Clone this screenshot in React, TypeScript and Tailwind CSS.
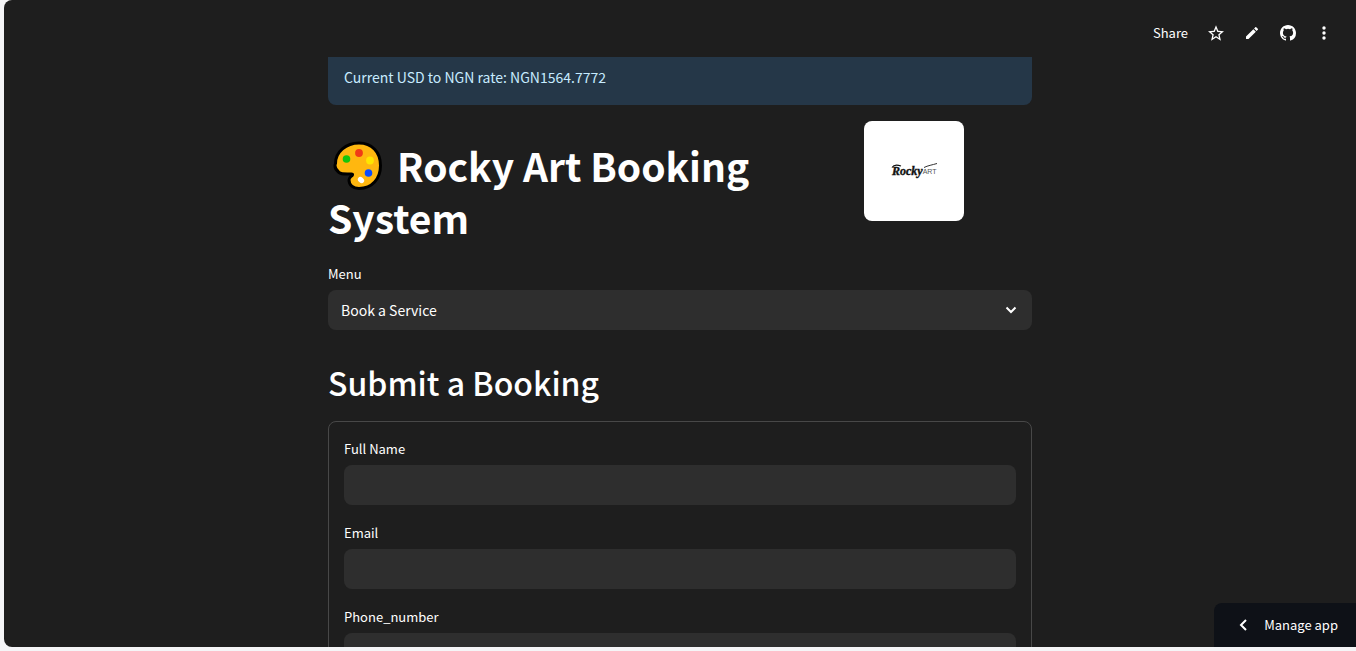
import { useId } from "react";

function PaletteIcon() {
  return (
    <svg viewBox="0 0 50 50" className="inline-block size-[50px]" role="img" aria-label="Palette">
      <path
        d="M26 2C13 2 2.5 11 2.5 22.500C1 26 3 29 6 31.500C8.500 33.500 12 33 18.500 33C20 33 20 34.500 18 35.500C16.500 36.500 16 37.500 16 39C16 44 20 47.500 26 47.500C39 47.500 47.500 38 47.500 24.500C47.500 11 39 2 26 2Z"
        fill="#ffb70f"
        stroke="#000"
        strokeWidth="3"
        strokeLinejoin="round"
      />
      <circle cx="13.500" cy="18" r="3.800" fill="#16c60c" />
      <circle cx="26" cy="12" r="3.900" fill="#f03a17" />
      <circle cx="37" cy="19.500" r="3.900" fill="#ffe600" />
      <circle cx="35.500" cy="32" r="3.800" fill="#0a4cff" />
      <ellipse cx="28" cy="39" rx="3.500" ry="2.600" transform="rotate(42 28 39)" fill="#fff" />
    </svg>
  );
}

function Logo() {
  return (
    <svg viewBox="0 0 100 100" className="size-[100px] rounded-lg bg-white" role="img" aria-label="Rocky Art">
      <text x="28" y="54" fontSize="12" fontWeight="700" fontStyle="italic" fontFamily="Liberation Serif, serif" fill="#111" stroke="#111" strokeWidth="0.400">
        Rocky
        <tspan fontSize="7" fontWeight="400" fontStyle="normal" fontFamily="Liberation Sans, sans-serif" fill="#555" stroke="none" dy="-1">
          ART
        </tspan>
      </text>
      <path d="M60 46.500C64 44.500 68 44 73 42.500" fill="none" stroke="#333" strokeWidth="1" />
      <path d="M28 46.500C29.500 44 33 43.500 37 45" fill="none" stroke="#111" strokeWidth="1.200" />
    </svg>
  );
}

function Field({ label, type = "text" }: { label: string; type?: string }) {
  const id = useId();
  return (
    <div className="flex flex-col">
      <label htmlFor={id} className="mb-1 h-6 text-[13px] leading-6">
        {label}
      </label>
      <input id={id} type={type} className="h-10 w-full rounded-lg bg-[#2e2e2e] px-3 text-sm outline-none" />
    </div>
  );
}

export default function App() {
  return (
    <div className="h-screen bg-[#f5f5f7] pb-1 pl-1 font-['Noto_Sans_CJK_JP',sans-serif] text-white">
      <div className="relative flex h-full flex-col overflow-hidden rounded-l-lg bg-[#1e1e1e]">
        <header className="flex h-[57px] shrink-0 items-center justify-end gap-5 pt-2 pr-6">
          <button className="text-[13px] leading-5">Share</button>
          <button aria-label="Favorite">
            <svg viewBox="0 0 24 24" className="size-4" fill="currentColor">
              <path d="M24 9.240l-8.630-.740L12 .5 8.630 8.500 0 9.240l6.550 5.680L4.580 23.500 12 18.900l7.420 4.600-1.960-8.580L24 9.240zM12 16.650l-4.510 2.720 1.200-5.130-3.980-3.450 5.250-.460L12 5.500l2.050 4.840 5.250.460-3.980 3.450 1.200 5.130L12 16.650z" />
            </svg>
          </button>
          <button aria-label="Edit">
            <svg viewBox="3 3 18 18" className="size-4 p-[2px]" fill="currentColor">
              <path d="M3 17.250V21h3.750L17.810 9.940l-3.750-3.750L3 17.250zM20.710 7.040a1 1 0 0 0 0-1.410l-2.340-2.340a1 1 0 0 0-1.410 0l-1.830 1.830 3.750 3.750 1.830-1.830z" />
            </svg>
          </button>
          <button aria-label="View source on GitHub">
            <svg viewBox="0 0 16 16" className="size-4" fill="currentColor">
              <path d="M8 0C3.580 0 0 3.580 0 8c0 3.540 2.290 6.530 5.470 7.590.4.070.55-.17.55-.38 0-.19-.01-.82-.01-1.490-2.010.37-2.530-.49-2.690-.94-.09-.23-.48-.94-.82-1.130-.28-.15-.68-.52-.01-.53.63-.01 1.080.58 1.230.82.72 1.210 1.870.87 2.330.66.07-.52.28-.87.51-1.070-1.780-.2-3.640-.89-3.640-3.950 0-.87.31-1.590.82-2.150-.08-.2-.36-1.020.08-2.120 0 0 .67-.21 2.200.82a7.640 7.640 0 0 1 4 0c1.530-1.040 2.200-.82 2.200-.82.44 1.100.16 1.920.08 2.120.51.56.82 1.270.82 2.150 0 3.070-1.870 3.750-3.650 3.950.29.25.54.73.54 1.480 0 1.070-.01 1.930-.01 2.200 0 .21.15.46.55.38A8.010 8.010 0 0 0 16 8c0-4.420-3.580-8-8-8z" />
            </svg>
          </button>
          <button aria-label="More options">
            <svg viewBox="0 0 16 16" className="size-4" fill="currentColor">
              <circle cx="8" cy="3" r="1.700" />
              <circle cx="8" cy="8" r="1.700" />
              <circle cx="8" cy="13" r="1.700" />
            </svg>
          </button>
        </header>

        <main className="min-h-0 flex-1 overflow-hidden">
          <div className="mx-auto flex w-full max-w-[704px] flex-col">
            <div className="rounded-b-lg bg-[#253748] px-4 pt-2 pb-4 text-[#c7ebff]">
              <p className="text-sm leading-6">Current USD to NGN rate: NGN1564.7772</p>
            </div>

            <div className="mt-4 flex gap-4">
              <h1 className="w-[520px] pt-[18px] text-[39px] leading-[52px] font-bold">
                <span className="mr-[14px] ml-[5px] inline-flex h-[52px] items-end align-top">
                  <PaletteIcon />
                </span>
                Rocky Art Booking System
              </h1>
              <div>
                <Logo />
              </div>
            </div>

            <div className="mt-[19px] flex flex-col">
              <label htmlFor="menu" className="mb-1 h-6 text-[13px] leading-6">
                Menu
              </label>
              <div className="relative">
                <select id="menu" className="h-10 w-full appearance-none rounded-lg bg-[#2e2e2e] px-[13px] text-sm outline-none">
                  <option>Book a Service</option>
                </select>
                <svg viewBox="0 0 12 8" className="pointer-events-none absolute top-4 right-[15px] h-2 w-3" fill="none" stroke="currentColor" strokeWidth="2">
                  <path d="M1.500 1.500L6 6L10.500 1.500" />
                </svg>
              </div>
            </div>

            <h2 className="mt-[30px] text-[32px] leading-[45px] font-medium">Submit a Booking</h2>

            <form className="mt-4 flex flex-col gap-4 rounded-lg border border-[#484848] p-[15px]">
              <Field label="Full Name" />
              <Field label="Email" type="email" />
              <Field label="Phone_number" type="tel" />
            </form>
          </div>
        </main>

        <button className="absolute right-0 bottom-0 flex h-11 items-center gap-[14px] rounded-tl-lg bg-[#0e1117] pr-[18px] pl-6 text-[13px]">
          <svg viewBox="0 0 12 12" className="size-3" fill="none" stroke="currentColor" strokeWidth="2">
            <path d="M8 1L3 6L8 11" />
          </svg>
          Manage app
        </button>
      </div>
    </div>
  );
}
